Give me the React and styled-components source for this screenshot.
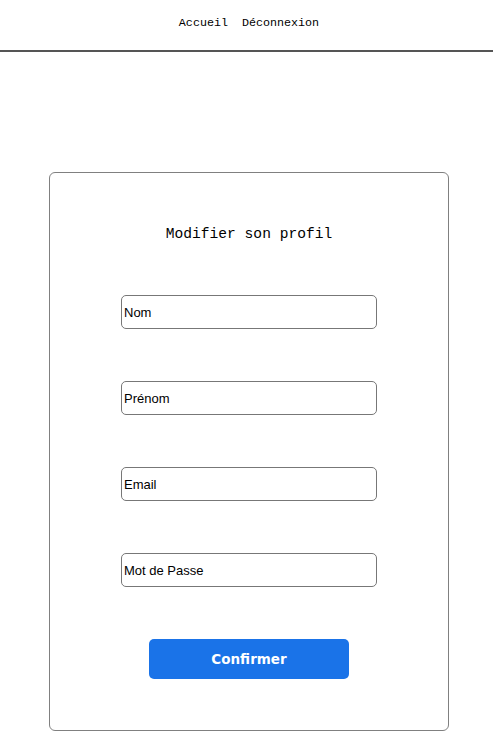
import React from 'react'
import styled, { createGlobalStyle } from 'styled-components'

const GlobalStyle = createGlobalStyle`
   body {
      margin: 0;
      background: #fff;
      font-family: "Liberation Sans", Arial, sans-serif;
   }
`;

const fields = ['Nom', 'Prénom', 'Email', 'Mot de Passe'];

function App() {
   const handleSubmit = e => {
      e.preventDefault()
   }

   return (
      <>
      <GlobalStyle />
      <Header>
         <NavLink href="#">Accueil</NavLink>
         <NavLink href="#">Déconnexion</NavLink>
      </Header>
      <Main>
         <Card onSubmit={handleSubmit}>
            <Title>Modifier son profil</Title>
            {fields.map(field => (
               <Field
                  key={field}
                  type={field === 'Mot de Passe' ? 'password' : 'text'}
                  placeholder={field}
               />
            ))}
            <Submit type="submit">Confirmer</Submit>
         </Card>
      </Main>
      </>
   )
}

const Header = styled.nav`
   display: flex;
   justify-content: center;
   align-items: flex-start;
   gap: 14px;
   height: 52px;
   padding-top: 15px;
   box-sizing: border-box;
   border-bottom: 2px solid #555;
   padding-left: 5px;
`;

const NavLink = styled.a`
   font-family: "Liberation Mono", "DejaVu Sans Mono", monospace;
   font-size: 11.7px;
   line-height: 16px;
   color: #000;
   text-decoration: none;
`;

const Main = styled.main`
   display: flex;
   justify-content: center;
   padding: 120px 0 0 5px;
`;

const Card = styled.form`
   display: flex;
   flex-direction: column;
   align-items: center;
   gap: 52px;
   width: 400px;
   box-sizing: border-box;
   padding: 52px 0 51px;
   border: 1px solid #808080;
   border-radius: 6px;
`;

const Title = styled.h2`
   margin: 0;
   font-family: "Liberation Mono", "DejaVu Sans Mono", monospace;
   font-size: 14.6px;
   font-weight: normal;
   line-height: 18px;
   color: #000;
`;

const Field = styled.input`
   width: 256px;
   height: 34px;
   box-sizing: border-box;
   padding: 0 2px;
   border: 1px solid #777;
   border-radius: 5px;
   font-family: "Liberation Sans", Arial, sans-serif;
   font-size: 13px;
   color: #000;
   outline: none;

   &::placeholder {
      color: #000;
   }
`;

const Submit = styled.button`
   width: 200px;
   height: 40px;
   border: none;
   border-radius: 5px;
   background: #1a73e8;
   color: #fff;
   font-family: "DejaVu Sans", Verdana, sans-serif;
   font-size: 13.5px;
   font-weight: bold;
   cursor: pointer;
`;

export default App
